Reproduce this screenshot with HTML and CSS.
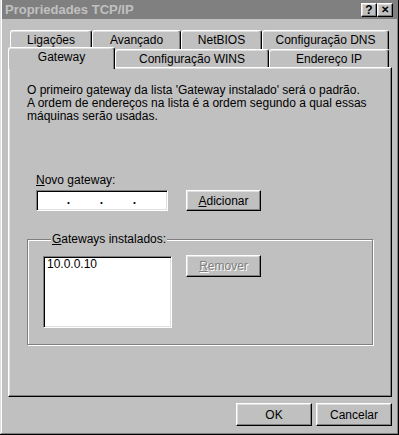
FILE: index.html
```html
<html>
    <head>
        <link rel="stylesheet" href="styles.css">
    </head>
    <body>
        <div class="window">
            <div class="titlebar">
                <span class="title">Propriedades TCP/IP</span>
                <span class="tb-btn">?</span>
                <span class="tb-btn close">&#x2715;</span>
            </div>

            <div class="tabrow back">
                <div class="tab t-lig">Ligações</div>
                <div class="tab t-ava">Avançado</div>
                <div class="tab t-net">NetBIOS</div>
                <div class="tab t-dns">Configuração DNS</div>
            </div>
            <div class="tabrow front">
                <div class="tab selected t-gw">Gateway</div>
                <div class="tab t-wins">Configuração WINS</div>
                <div class="tab t-ip">Endereço IP</div>
            </div>

            <div class="panel">
                <p class="info">O primeiro gateway da lista 'Gateway instalado' será o padrão.<br>A ordem de endereços na lista é a ordem segundo a qual essas<br>máquinas serão usadas.</p>

                <div class="newgw">
                    <div class="label"><u>N</u>ovo gateway:</div>
                    <div class="row">
                        <div class="ipbox">
                            <span>.</span><span>.</span><span>.</span><span></span>
                        </div>
                        <button class="btn add"><u>A</u>dicionar</button>
                    </div>
                </div>

                <div class="group">
                    <div class="group-label"><u>G</u>ateways instalados:</div>
                    <div class="row">
                        <div class="listbox">10.0.0.10</div>
                        <button class="btn remove" disabled><u>R</u>emover</button>
                    </div>
                </div>
            </div>

            <div class="footer">
                <button class="btn big">OK</button>
                <button class="btn big">Cancelar</button>
            </div>
        </div>
    </body>
</html>
```

FILE: styles.css
```css
*{
    padding:0;
    margin:0;
    box-sizing:border-box;
}
body{
    background:#c0c0c0;
    font-family:"Liberation Sans", Arial, sans-serif;
    font-size:12px;
    line-height:13px;
    color:#000;
}
.window{
    width:399px;
    height:435px;
    background:#c0c0c0;
    padding:0 2px 2px 2px;
    box-shadow: inset -1px -1px #000, inset 1px 0 #dfdfdf, inset -2px -2px #808080, inset 2px 0 #fff;
    display:flex;
    flex-direction:column;
}
.titlebar{
    height:19px;
    background:#808080;
    display:flex;
    align-items:center;
    padding:0 4px 0 3px;
}
.title{
    flex:1;
    color:#c0c0c0;
    font-weight:bold;
    font-size:13px;
}
.tb-btn{
    width:16px;
    height:14px;
    background:#c0c0c0;
    border:1px solid;
    border-color:#fff #000 #000 #fff;
    box-shadow: inset -1px -1px #808080, inset 1px 1px #dfdfdf;
    font-weight:bold;
    font-size:12px;
    line-height:12px;
    text-align:center;
}
.tb-btn.close{
    font-size:10px;
}

/* tabs */
.tabrow{
    display:flex;
}
.tabrow.back{
    margin:11px 0 0 8px;
    height:19px;
}
.tabrow.front{
    margin:-2px 0 0 6px;
    height:20px;
    align-items:flex-end;
}
.tab{
    background:#c0c0c0;
    border:1px solid;
    border-bottom:none;
    border-color:#fff #000 #000 #fff;
    border-radius:3px 3px 0 0;
    box-shadow: inset -1px 0 #808080, inset 0 1px #dfdfdf;
    text-align:center;
    padding-top:3px;
}
.back .tab{
    height:19px;
}
.front .tab{
    height:18px;
    padding-top:3px;
}
.front .tab.selected{
    height:22px;
    margin-bottom:-2px;
    position:relative;
    z-index:1;
    padding-top:3px;
}
.t-lig{ width:82px; }
.t-ava{ width:89px; }
.t-net{ width:81px; }
.t-dns{ width:127px; }
.t-gw{ width:107px; }
.t-wins{ width:154px; }
.t-ip{ width:120px; }

.panel{
    margin-left:6px;
    width:384px;
    height:330px;
    border:1px solid;
    border-color:#fff #000 #000 #fff;
    box-shadow: inset -1px -1px #808080, inset 1px 1px #dfdfdf;
    padding:16px 18px 0 18px;
}
.info{
    white-space:nowrap;
}
.newgw{
    margin:51px 0 0 9px;
}
.label{
    margin-bottom:3px;
}
.row{
    display:flex;
    align-items:flex-start;
}
.ipbox{
    width:132px;
    height:21px;
    background:#fff;
    border:1px solid;
    border-color:#808080 #fff #fff #808080;
    box-shadow: inset 1px 1px #000, inset -1px -1px #dfdfdf;
    display:grid;
    grid-template-columns:repeat(4, 33px);
    padding:3px 0 0 0;
    font-weight:bold;
}
.ipbox span{
    text-align:right;
}
.btn{
    font-family:"Liberation Sans", Arial, sans-serif;
    font-size:12px;
    color:#000;
    background:#c0c0c0;
    border:1px solid;
    border-color:#fff #000 #000 #fff;
    box-shadow: inset -1px -1px #808080, inset 1px 1px #dfdfdf;
    width:75px;
    height:21px;
}
.add{
    margin-left:18px;
}
.group{
    margin-top:28px;
    border:1px solid #808080;
    box-shadow: inset 1px 1px #fff, 1px 1px #fff;
    padding:0 0 16px 15px;
}
.group-label{
    margin:-7px 0 0 8px;
    padding:0 1px;
    background:#c0c0c0;
    width:fit-content;
}
.group .row{
    margin-top:10px;
}
.listbox{
    width:129px;
    height:72px;
    background:#fff;
    border:1px solid;
    border-color:#808080 #fff #fff #808080;
    box-shadow: inset 1px 1px #000, inset -1px -1px #dfdfdf;
    padding:1px 3px;
}
.remove{
    margin:-1px 0 0 14px;
    height:22px;
    color:#808080;
    text-shadow:1px 1px #fff;
}
.footer{
    display:flex;
    justify-content:flex-end;
    gap:4px;
    margin-top:6px;
    padding-right:5px;
}
.btn.big{
    width:76px;
    height:23px;
}
```
